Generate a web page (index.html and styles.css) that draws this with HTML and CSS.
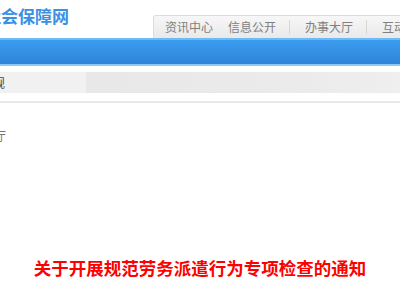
FILE: index.html
```html
<!DOCTYPE html>
<html lang="zh-CN">
<head>
<meta charset="utf-8">
<title>社会保障网</title>
<link rel="stylesheet" href="styles.css">
</head>
<body>
<div class="page">
  <div class="header">
    <div class="logo">社会保障网</div>
    <ul class="tabs">
      <li>资讯中心</li>
      <li>信息公开</li>
      <li class="sep">办事大厅</li>
      <li class="sep">互动交流</li>
    </ul>
  </div>
  <div class="navbar"></div>
  <div class="crumb">
    <div class="crumb_left">政策法规</div>
    <div class="crumb_right"></div>
  </div>
  <div class="content">
    <div class="side">办事大厅</div>
    <h1 class="title">关于开展规范劳务派遣行为专项检查的通知</h1>
  </div>
</div>
</body>
</html>
```

FILE: styles.css
```css
html, body {
    margin: 0;
    padding: 0;
    background: #fff;
}

.page {
    width: 400px;
    height: 300px;
    overflow: hidden;
    font-family: "Noto Sans CJK SC", sans-serif;
}

.header {
    display: flex;
    height: 38px;
}

.logo {
    margin-left: -16px;
    padding-top: 4px;
    font-size: 17px;
    font-weight: bold;
    line-height: 24px;
    color: #3a90e5;
    white-space: nowrap;
}

.tabs {
    display: flex;
    margin: 15px 0 0 84px;
    padding: 0 0 0 3px;
    list-style: none;
    height: 22px;
    border: 1px solid #dcdcdc;
    border-bottom: none;
    border-radius: 3px 0 0 0;
    background: linear-gradient(#f7f7f7, #e9e9e9);
    white-space: nowrap;
}

.tabs li {
    margin-top: 4px;
    height: 14px;
    padding: 0 7px 0 8px;
    font-size: 12px;
    line-height: 14px;
    color: #808080;
}

.tabs li.sep {
    margin-left: 6px;
    padding-left: 15px;
    border-left: 1px solid #d6d6d6;
}

.navbar {
    height: 24px;
    border-top: 2px solid #6cbcf2;
    border-bottom: 2px solid #8ccaf2;
    background: linear-gradient(#3a9cf0, #2f84d6);
}

.crumb {
    display: flex;
    height: 21px;
    margin-top: 6px;
}

.crumb_left {
    width: 86px;
    flex-shrink: 0;
    background: #f1f1f1;
    font-size: 12px;
    line-height: 21px;
    color: #444;
    text-indent: -43px;
    white-space: nowrap;
    overflow: hidden;
}

.crumb_right {
    flex: 1;
    background: linear-gradient(90deg, #e8e8e8, #ebebeb 70%, #efefef);
}

.content {
    margin-top: 8px;
    border-top: 2px solid #e8e8e8;
}

.side {
    margin: 25px 0 0 -42px;
    font-size: 12px;
    line-height: 16px;
    color: #777;
}

.title {
    margin: 112px 0 0;
    font-size: 17.5px;
    line-height: 24px;
    font-weight: bold;
    color: #ff0000;
    text-align: center;
}
```
